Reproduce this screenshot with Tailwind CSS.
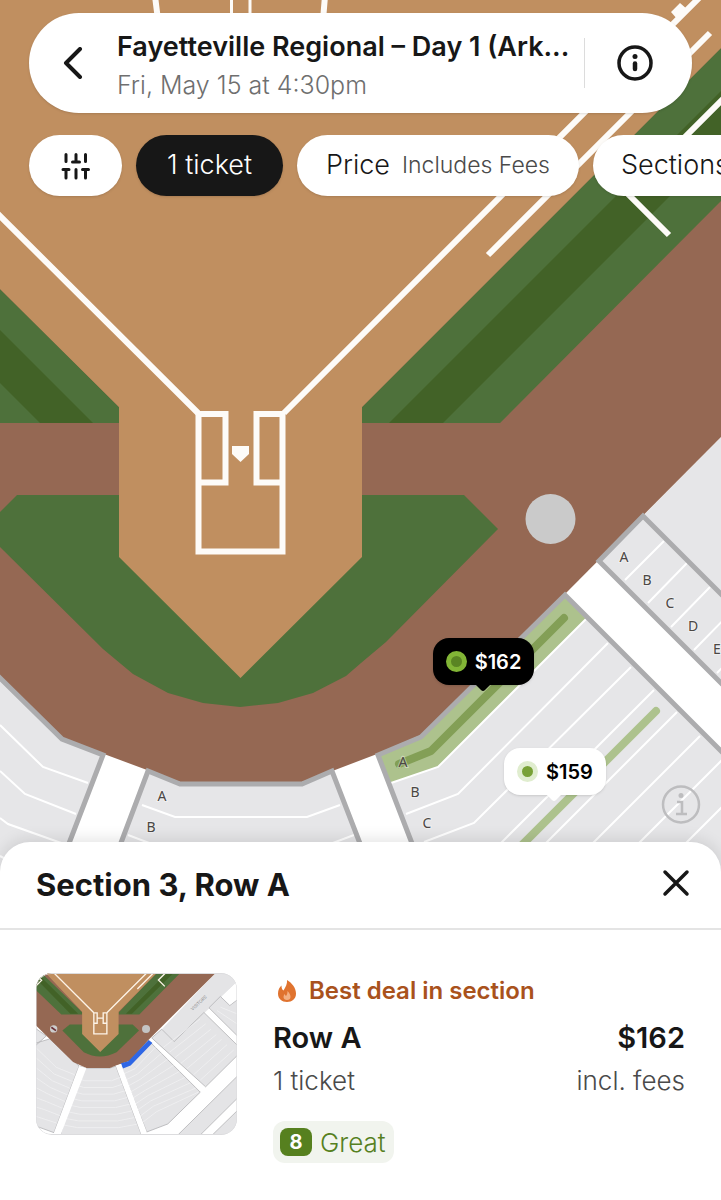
<!DOCTYPE html>
<html lang="en">
<head>
  <meta charset="UTF-8" />
  <meta name="viewport" content="width=device-width, initial-scale=1.0" />
  <title>Fayetteville Regional – Day 1</title>
  <script src="https://cdn.jsdelivr.net/npm/@tailwindcss/browser@4"></script>
</head>
<body class="bg-white font-['Inter','Liberation_Sans',sans-serif] text-[#171717]">
  <main class="flex min-h-screen flex-col">

    <!-- Map -->
    <section class="relative flex-1 overflow-hidden bg-white" aria-label="Seating map">
      <svg class="absolute inset-0 h-full w-full" viewBox="0 0 721 872" preserveAspectRatio="xMinYMin slice" aria-hidden="true">
        <rect width="721" height="872" fill="#fff" />
        <!-- stands -->
        <g fill="#e6e6e8">
          <path d="M643 516 721 437V594Z" />
          <path d="M643 516 599 561 721 683V594Z" />
          <path d="M565 595 740 770V872H422L377 755 421 737Z" />
          <path d="M147 770 180 784H302L333 771 371 872H109Z" />
          <path d="M0 678 62 739 104 755 58 872H0Z" />
        </g>
        <!-- row lines -->
        <g fill="none" stroke="#fff" stroke-width="2">
          <path d="M664 541 625 580M687 563 648 603M710 587 671 627M733 610 694 650M756 633 717 673" />
          <path d="M406 814 458 794 608 643M424 842 474 823 631 667M654 690 480 864M677 712 525 864M700 736 572 864M723 759 618 864M746 783 665 864" />
          <path d="M142 805 175 817H307L340 805M128 835 165 849H317L354 835" />
          <path d="M0 725 43 767 88 783M0 771 25 794 76 814M0 818 8 824 64 844M0 856 30 872" />
        </g>
        <!-- row A and the listed rows -->
        <path d="M379 756 421 738 565 597 586 619 438 767 391 783Z" fill="#adc28d" />
        <path d="M391 783 438 767 586 619" fill="none" stroke="#fff" stroke-width="2" />
        <path d="M399 764 431 751 564 618" fill="none" stroke="#839f56" stroke-width="8" stroke-linecap="round" stroke-linejoin="round" />
        <path d="M656 711 506 861" fill="none" stroke="#adc28d" stroke-width="8" stroke-linecap="round" />
        <!-- field -->
        <path d="M0 0H721V437L565 594 421 735 377 754 335 770 302 782H180L147 770 104 754 62 738 0 677Z" fill="#956853" />
        <g fill="none" stroke="#acacae" stroke-width="5">
          <path d="M740 613 643 516 599 561 740 702" />
          <path d="M740 770 565 595 421 737 378 755 423 872" />
          <path d="M110 872 148 771 180 784H302L332 771 371 872" />
          <path d="M-2 676 62 739 103 755 58 872" />
        </g>
        <path d="M362 407 769 0H921L500 423H362ZM119 407 0 289V423H119Z" fill="#4e713b" />
        <path d="M389 423 812 0H866L443 423ZM93 423 0 330V383L40 423Z" fill="#426227" />
        <path d="M17 495H464L498 529 386 642 361 663 346 676 313 693 278 703 240 707 203 703 168 693 133 674 103 649 0 547V512Z" fill="#4e713b" />
        <path d="M0 0H769L362 407V557L240.500 678 119 557V407L0 289Z" fill="#c08f60" />
        <g fill="none" stroke="#fdfbf8" stroke-width="6">
          <path d="M-5 211 198 413M284 413 701 -4M488 255 710 33" />
          <path d="M669 235 628 194 725 97" />
          <path d="M155 -4 158 20M325 -4 323 20" />
          <path d="M198.500 414H225.500V482.500H198.500ZM256.500 414H282.500V482.500H256.500ZM198.500 480V551.500H282.500V480" />
          <path d="M231.500 0V20M250 0V20" stroke-width="3" />
        </g>
        <path d="M671 12 680 3 688 10 678 20ZM232 446H249V454L240.500 462 232 454Z" fill="#fdfbf8" />
        <circle cx="550.500" cy="519" r="25" fill="#cacaca" />
        <!-- row letters -->
        <g class="font-['Noto_Sans',sans-serif] text-[14px]" fill="#4b4744" text-anchor="middle" stroke="#fff" stroke-width="2" stroke-opacity=".4" paint-order="stroke">
          <text x="624" y="562">A</text><text x="647" y="585">B</text><text x="670" y="608">C</text><text x="693" y="631">D</text><text x="717" y="654">E</text>
          <text x="403" y="767">A</text><text x="415" y="797">B</text><text x="427" y="828">C</text>
          <text x="162" y="801">A</text><text x="151" y="832">B</text>
        </g>
        <g fill="none" stroke="#bdbdbf" stroke-width="2.500">
          <circle cx="681" cy="804.500" r="18" />
          <path d="M677 802H682V814M676 814H687" />
          <circle cx="681" cy="795.500" r="2.500" fill="#bdbdbf" stroke="none" />
        </g>
      </svg>

      <!-- Price pins -->
      <button class="absolute left-[433px] top-[638px] flex h-[47px] w-[101px] items-center justify-center gap-2 rounded-2xl bg-black text-[20px] font-semibold text-white shadow-sm">
        <span class="size-[21px] rounded-full border-[5px] border-[#82b536] bg-[#5a8423]"></span>$162
        <svg class="absolute top-[46px] left-[42px] h-2 w-4" viewBox="0 0 16 8" aria-hidden="true"><path d="M0 0H16L10 6Q8 8 6 6Z" fill="#000" /></svg>
      </button>
      <button class="absolute left-[504px] top-[748px] flex h-[47px] w-[102px] items-center justify-center gap-2 rounded-2xl bg-white text-[20px] font-semibold text-black shadow-sm">
        <span class="size-[21px] rounded-full border-[5px] border-[#e0edcf] bg-[#78a136]"></span>$159
        <svg class="absolute top-[46px] left-[42px] h-2 w-4" viewBox="0 0 16 8" aria-hidden="true"><path d="M0 0H16L10 6Q8 8 6 6Z" fill="#fff" /></svg>
      </button>

      <!-- Event bar -->
      <header class="relative mx-[29px] mt-[13px] flex h-[100px] items-center rounded-full bg-white shadow-sm">
        <button class="flex h-full w-[88px] shrink-0 items-center justify-center" aria-label="Back">
          <svg class="h-8 w-5" viewBox="0 0 20 32" fill="none" stroke="#171717" stroke-width="4" stroke-linecap="round" stroke-linejoin="round" aria-hidden="true"><path d="M17 2 3 16 17 30" /></svg>
        </button>
        <div class="min-w-0 flex-1 pt-2">
          <h1 class="truncate text-[27px] leading-9 font-semibold">Fayetteville Regional – Day 1 (Ark...</h1>
          <p class="truncate text-[25px] leading-10 font-light text-[#6f6f6f]">Fri, May 15 at 4:30pm</p>
        </div>
        <div class="h-[50px] w-px shrink-0 bg-[#dcdcdc]"></div>
        <button class="flex h-full w-[107px] shrink-0 items-center justify-center pr-2" aria-label="Event info">
          <svg class="size-9" viewBox="0 0 36 36" fill="none" stroke="#171717" stroke-width="3.500" stroke-linecap="round" aria-hidden="true">
            <circle cx="18" cy="18" r="16" />
            <path d="M18 18.500V24" stroke-width="4.500" />
            <circle cx="18" cy="11.500" r="2.500" fill="#171717" stroke="none" />
          </svg>
        </button>
      </header>

      <!-- Filters -->
      <nav class="relative mt-[22px] flex gap-[14px] overflow-x-auto pb-4 pl-[29px] text-[27px] font-light whitespace-nowrap [scrollbar-width:none]" aria-label="Filters">
        <button class="flex h-[61px] w-[93px] shrink-0 items-center justify-center rounded-full bg-white shadow-sm" aria-label="All filters">
          <svg class="h-7 w-[30px]" viewBox="0 0 30 28" fill="none" stroke="#171717" stroke-width="3" stroke-linecap="round" aria-hidden="true">
            <path d="M5 2.500V9.500M15 2.500V9.500M24.500 2.500V9.500M11.500 10H18.500M2 17.500H8M21.500 17.500H27.500M5 17.500V26M15 17.500V26M24.500 17.500V26" />
          </svg>
        </button>
        <button class="h-[61px] w-[147px] shrink-0 rounded-full bg-[#171717] text-white shadow-sm">1 ticket</button>
        <button class="flex h-[61px] w-[282px] shrink-0 items-center justify-center gap-3 rounded-full bg-white shadow-sm">Price <span class="text-[23px] text-[#4a4a4a]">Includes Fees</span></button>
        <button class="h-[61px] shrink-0 rounded-full bg-white px-7 shadow-sm">Sections</button>
      </nav>
    </section>

    <!-- Listing sheet -->
    <section class="relative -mt-[30px] rounded-t-[30px] bg-white shadow-[0_-2px_16px_rgba(0,0,0,0.12)]" aria-label="Listing">
      <div class="flex h-[88px] items-center justify-between border-b-2 border-[#e4e4e4] pr-[30px] pl-9">
        <h2 class="text-[31px] font-bold">Section 3, Row A</h2>
        <button class="pb-1" aria-label="Close">
          <svg class="size-[30px]" viewBox="0 0 30 30" fill="none" stroke="#171717" stroke-width="3.500" stroke-linecap="round" aria-hidden="true"><path d="M4 4 26 26M26 4 4 26" /></svg>
        </button>
      </div>

      <a href="#" class="flex gap-9 px-9 pt-[43px] pb-[37px]">
        <svg class="h-[162px] w-[201px] shrink-0 rounded-2xl" viewBox="48 68 603 484" preserveAspectRatio="xMidYMid slice" role="img" aria-label="Seat view">
          <rect x="48" y="68" width="603" height="484" fill="#fff" />
          <g fill="#e4e4e6" stroke="#b5b5b7" stroke-width="2.500">
            <path d="M586 68H651V94L462 273 425 236Z" stroke="none" />
            <path d="M600 138 566 172 655 260V145L628 165ZM551 186 462 273 425 236 395 262 556 408 655 310V288Z" />
            <path d="M386 270 540 424 443 519 380 543 303 348Z" />
            <path d="M178 346 200 352H270L288 346 366 556H121Z" />
            <path d="M40 280 90 265 178 346 103 545 40 522ZM40 228 80 256 40 292Z" />
            <path d="M473 552 655 372V438L540 552ZM576 552 655 475V560Z" />
          </g>
          <g fill="none" stroke="#f3f3f5" stroke-width="2">
            <path d="M310 370 345 354 406 290M317 388 352 370 424 308M324 406 360 386 442 326M331 424 368 402 460 344M338 442 376 418 478 362M345 460 384 434 494 380M352 478 392 450 510 396M360 496 400 466 526 412M368 514 410 482 534 424" />
            <path d="M166 380 195 390H275L300 380M159 400 192 410H278L308 400M152 420 189 430H281L315 420M145 440 186 450H284L322 440M138 460 183 470H287L329 460M131 480 180 490H290L336 480M124 500 177 510H293L343 500M120 520 174 530H296L350 520" />
            <path d="M48 290 110 350 165 372M48 320 104 370 158 392M48 350 98 390 150 412M48 380 92 410 143 432M48 410 86 430 136 452M48 440 80 452 128 472M48 468 74 476 120 494M48 496 110 516" />
            <path d="M540 205 430 290M556 220 448 305M572 236 464 321M588 252 482 338M604 266 500 354M620 282 520 372M640 298 540 388M650 190 600 170M650 220 590 180" />
          </g>
          <path d="M48 68H586L385 268 330 330 288 344 270 352H200L160 334 48 224Z" fill="#956853" />
          <path d="M66 68 188 186V192H125L48 118V68ZM296 186 410 68H480L358 192H296Z" fill="#4e713b" />
          <path d="M48 84 152 190H175L56 72ZM318 190 440 68H460L336 190Z" fill="#426227" />
          <path d="M150 222H338L357 240 290 305Q240 330 192 305L128 240Z" fill="#4e713b" />
          <path d="M78 68H410L296 184V250L241 304 187 250V184Z" fill="#c08f60" />
          <g fill="none" stroke="#fdf4e8" stroke-width="4">
            <path d="M103 68 222 187M380 68 261 187M352 116 400 68M48 108 66 90 56 80M434 108 415 89 436 68" />
            <path d="M222 187H232V218H222ZM250 187H261V218H250ZM222 218V250H261V218M233 203H250" />
          </g>
          <circle cx="102" cy="235" r="11" fill="#ccc" /><path d="M95 230 109 240" stroke="#6b3038" stroke-width="5" />
          <circle cx="378" cy="235" r="12" fill="#c4c4c4" />
          <path d="M303 338 325 332 386 268 397 277 332 344 309 353Z" fill="#2f67e5" />
          <path d="M630 162 604 138 651 94V145ZM103 545 178 346 200 352 121 556ZM366 556 288 346 303 340 380 543Z" fill="#fff" />
          <text x="536" y="162" transform="rotate(-43 536 158)" text-anchor="middle" fill="#8a8a8c" class="text-[13px]">VISITORS</text>
          <rect x="49.500" y="69.500" width="600" height="481" rx="46" fill="none" stroke="#dcdcde" stroke-width="3" />
        </svg>

        <div class="min-w-0 flex-1">
          <p class="flex items-center gap-3 pl-1 text-[24px] leading-9 font-semibold text-[#a9521c]">
            <svg class="h-6 w-5" viewBox="0 0 20 24" aria-hidden="true">
              <path d="M10 1C15 4 19 9 19 14.500 19 20 15 23 10 23S1 20 1 14.500C1 11 2.500 8 4.500 6.500 4.500 9 5 10.500 6.500 11.500 8.500 8 10.500 5 10 1Z" fill="#e0732f" />
              <path d="M10.500 12C12.500 14 13.500 16 13.500 18 13.500 20 12 21 10 21S6.500 20 6.500 18C6.500 17 7 16 7.500 15 8 16 8.500 16.500 9 17 10 16 10.500 14 10.500 12Z" fill="#f3b083" />
            </svg>
            Best deal in section
          </p>
          <div class="mt-2 flex items-center justify-between text-[29px] leading-[42px] font-semibold"><span>Row A</span><span>$162</span></div>
          <div class="flex items-center justify-between text-[26px] leading-[44px] font-light text-[#4a4a4a]"><span>1 ticket</span><span>incl. fees</span></div>
          <p class="mt-[18px] inline-flex h-[42px] items-center gap-2 rounded-xl bg-[#f1f4ee] pr-2 pl-[7px] text-[26px] font-light text-[#56801f]">
            <span class="flex h-7 w-8 items-center justify-center rounded-lg bg-[#56801f] text-[20px] font-bold text-white">8</span>Great
          </p>
        </div>
      </a>
    </section>
  </main>
</body>
</html>
